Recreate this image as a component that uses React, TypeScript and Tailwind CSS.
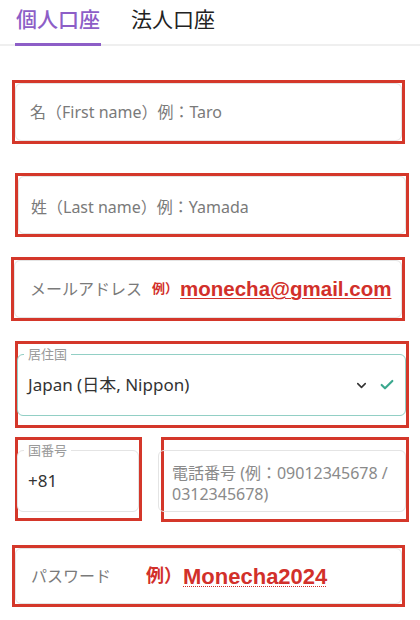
import { Check, ChevronDown } from "lucide-react"

const base = "font-['Noto_Sans','Noto_Sans_CJK_JP',sans-serif]"
const redFont = "font-['Liberation_Sans','Noto_Sans_CJK_JP',sans-serif]"

function Marked({ className, children }: { className: string; children: React.ReactNode }) {
    return <div className={`border-[3px] border-[#d4372a] ${className}`}>{children}</div>
}

export default function App() {
    return (
        <div className={`w-[420px] h-[620px] overflow-hidden bg-white ${base}`}>
            {/* Tabs */}
            <div className="flex h-[46px] border-b-2 border-[#efefef]">
                <div className="ml-[15px] -mb-[2px] flex w-[86px] justify-center border-b-[3px] border-[#8d5ec7] pt-[4px] text-[21px] font-medium text-[#8d5ec7]">
                    個人口座
                </div>
                <div className="ml-[30px] pt-[4px] text-[21px] text-[#222]">法人口座</div>
            </div>

            {/* First name */}
            <Marked className="ml-[12px] mt-[34px] h-[64px] w-[393px]">
                <div className="flex h-full items-center rounded-md border border-[#e4e4e4] pl-[14px] text-[16px] text-[#7a7a7a]">
                    名（First name）例：Taro
                </div>
            </Marked>

            {/* Last name */}
            <Marked className="ml-[15px] mt-[29px] h-[64px] w-[394px]">
                <div className="flex h-full items-center rounded-md border border-[#e4e4e4] pl-[12px] pt-[4px] text-[16px] text-[#7a7a7a]">
                    姓（Last name）例：Yamada
                </div>
            </Marked>

            {/* Email */}
            <Marked className="ml-[11px] mt-[20px] h-[64px] w-[394px]">
                <div className="flex h-full items-center rounded-md border border-[#e4e4e4] pl-[15px]">
                    <span className="text-[16px] text-[#7a7a7a]">メールアドレス</span>
                    <span className={`ml-[10px] text-[13px] font-bold text-[#d2302a] ${redFont}`}>例）</span>
                    <span className={`ml-[2px] text-[20.5px] font-bold text-[#d2302a] underline decoration-[#d2302a] decoration-1 underline-offset-2 ${redFont}`}>
                        monecha@gmail.com
                    </span>
                </div>
            </Marked>

            {/* Country */}
            <Marked className="ml-[15px] mt-[20px] h-[87px] w-[394px] pt-[10px]">
                <div className="relative -ml-[1px] flex h-[62px] items-center rounded-md border-[1.5px] border-[#92cfc5] pl-[10px] pr-[10px]">
                    <span className="absolute -top-[10px] left-[6px] bg-white px-[4px] text-[13px] leading-[18px] text-[#9a9a9a]">
                        居住国
                    </span>
                    <span className="text-[17px] text-[#333]">Japan (日本, Nippon)</span>
                    <ChevronDown className="ml-auto text-[#333]" size={15} strokeWidth={2.5} />
                    <Check className="ml-[10px] text-[#3ba88e]" size={16} strokeWidth={3.2} />
                </div>
            </Marked>

            {/* Phone */}
            <div className="mt-[9px] flex">
                <Marked className="ml-[15px] h-[84px] w-[127px] pt-[10px]">
                    <div className="relative -ml-[1px] flex h-[62px] items-center rounded-md border border-[#e4e4e4] pl-[10px]">
                        <span className="absolute -top-[10px] left-[6px] bg-white px-[4px] text-[13px] leading-[18px] text-[#9a9a9a]">
                            国番号
                        </span>
                        <span className="text-[17px] text-[#333]">+81</span>
                    </div>
                </Marked>
                <Marked className="ml-[19px] h-[85px] w-[248px] pt-[10px]">
                    <div className="-ml-[6px] flex h-[62px] items-center rounded-md border border-[#e4e4e4] pl-[13px] pt-[6px] text-[16px] leading-[21px] text-[#8a8a8a]">
                        電話番号 (例：09012345678 /
                        <br />
                        0312345678)
                    </div>
                </Marked>
            </div>

            {/* Password */}
            <Marked className="ml-[12px] mt-[23px] h-[62px] w-[393px]">
                <div className="flex h-full items-center rounded-md border border-[#e4e4e4] pl-[15px]">
                    <span className="text-[16px] text-[#7a7a7a]">パスワード</span>
                    <span className={`ml-[35px] text-[18px] font-bold text-[#d2302a] ${redFont}`}>例）</span>
                    <span className={`ml-[1px] text-[22px] font-bold text-[#d2302a] underline decoration-dotted decoration-[#d2302a] decoration-1 underline-offset-2 ${redFont}`}>
                        Monecha2024
                    </span>
                </div>
            </Marked>
        </div>
    )
}
